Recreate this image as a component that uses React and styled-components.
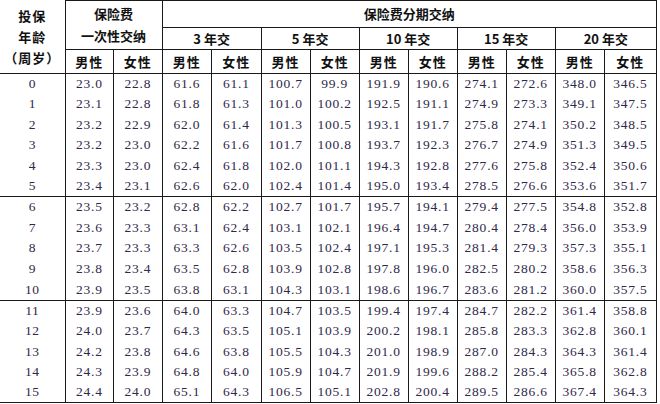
import React from 'react';
import styled, { createGlobalStyle } from 'styled-components';

const GlobalStyle = createGlobalStyle`
  html, body {
    margin: 0;
    padding: 0;
    background: #fff;
  }
`;

const Table = styled.table`
  border-collapse: collapse;
  table-layout: fixed;
  width: 657px;
  font-family: 'Liberation Serif', 'Noto Sans CJK SC', serif;
  td, th {
    border: 1.5px solid #1a1a1a;
    padding: 0;
    text-align: center;
    vertical-align: middle;
    overflow: hidden;
    white-space: nowrap;
  }
  tr > :first-child {
    border-left: none;
  }
  tbody:last-child {
    border-bottom: 1.5px solid #1a1a1a;
  }
`;

const HeadRow = styled.tr`
  height: ${props => props.h}px;
`;

const Head = styled.th`
  font-family: 'Noto Sans CJK SC', sans-serif;
  font-weight: 700;
  font-size: 13px;
  letter-spacing: ${props => props.ls || 0}px;
  line-height: ${props => props.lh || 16}px;
  color: #111;
  border-top: ${props => (props.noTop ? 'none' : '1.5px solid #1a1a1a')} !important;
`;

const Group = styled.tbody`
  border-top: 1.5px solid #1a1a1a;
  td {
    border-top: none;
    border-bottom: none;
  }
`;

const Row = styled.tr`
  height: ${props => props.h}px;
`;

const Cell = styled.td`
  font-size: 13.5px;
  letter-spacing: 0.8px;
  color: #30284a;
  line-height: 16px;
`;

const AgeCell = styled(Cell)`
  letter-spacing: 0.5px;
  color: #302848;
`;

const widths = [65, 48.5, 48.5, 49.5, 49.5, 49, 49, 49, 49, 49, 49, 49, 52];

const data = [
  ['23.0', '22.8', '61.6', '61.1', '100.7', '99.9', '191.9', '190.6', '274.1', '272.6', '348.0', '346.5'],
  ['23.1', '22.8', '61.8', '61.3', '101.0', '100.2', '192.5', '191.1', '274.9', '273.3', '349.1', '347.5'],
  ['23.2', '22.9', '62.0', '61.4', '101.3', '100.5', '193.1', '191.7', '275.8', '274.1', '350.2', '348.5'],
  ['23.2', '23.0', '62.2', '61.6', '101.7', '100.8', '193.7', '192.3', '276.7', '274.9', '351.3', '349.5'],
  ['23.3', '23.0', '62.4', '61.8', '102.0', '101.1', '194.3', '192.8', '277.6', '275.8', '352.4', '350.6'],
  ['23.4', '23.1', '62.6', '62.0', '102.4', '101.4', '195.0', '193.4', '278.5', '276.6', '353.6', '351.7'],
  ['23.5', '23.2', '62.8', '62.2', '102.7', '101.7', '195.7', '194.1', '279.4', '277.5', '354.8', '352.8'],
  ['23.6', '23.3', '63.1', '62.4', '103.1', '102.1', '196.4', '194.7', '280.4', '278.4', '356.0', '353.9'],
  ['23.7', '23.3', '63.3', '62.6', '103.5', '102.4', '197.1', '195.3', '281.4', '279.3', '357.3', '355.1'],
  ['23.8', '23.4', '63.5', '62.8', '103.9', '102.8', '197.8', '196.0', '282.5', '280.2', '358.6', '356.3'],
  ['23.9', '23.5', '63.8', '63.1', '104.3', '103.1', '198.6', '196.7', '283.6', '281.2', '360.0', '357.5'],
  ['23.9', '23.6', '64.0', '63.3', '104.7', '103.5', '199.4', '197.4', '284.7', '282.2', '361.4', '358.8'],
  ['24.0', '23.7', '64.3', '63.5', '105.1', '103.9', '200.2', '198.1', '285.8', '283.3', '362.8', '360.1'],
  ['24.2', '23.8', '64.6', '63.8', '105.5', '104.3', '201.0', '198.9', '287.0', '284.3', '364.3', '361.4'],
  ['24.3', '23.9', '64.8', '64.0', '105.9', '104.7', '201.9', '199.6', '288.2', '285.4', '365.8', '362.8'],
  ['24.4', '24.0', '65.1', '64.3', '106.5', '105.1', '202.8', '200.4', '289.5', '286.6', '367.4', '364.3'],
];

const groups = [
  { start: 0, end: 6, h: 20.5 },
  { start: 6, end: 11, h: 20.8 },
  { start: 11, end: 16, h: 20.5 },
];

const terms = ['3 年交', '5 年交', '10 年交', '15 年交', '20 年交'];

export default function App() {
  return (
    <>
      <GlobalStyle />
      <Table>
        <colgroup>
          {widths.map((w, i) => (
            <col key={i} style={{ width: w }} />
          ))}
        </colgroup>
        <thead>
          <HeadRow h={27}>
            <Head rowSpan={3} noTop lh={21} ls={1}>
              投保
              <br />
              年龄
              <br />
              （周岁）
            </Head>
            <Head rowSpan={2} colSpan={2} lh={22}>
              保险费
              <br />
              一次性交纳
            </Head>
            <Head colSpan={10}>保险费分期交纳</Head>
          </HeadRow>
          <HeadRow h={22}>
            {terms.map(t => (
              <Head key={t} colSpan={2}>
                {t}
              </Head>
            ))}
          </HeadRow>
          <HeadRow h={24}>
            {Array.from({ length: 6 }).flatMap((_, i) => [
              <Head key={`m${i}`} ls={1}>男性</Head>,
              <Head key={`f${i}`} ls={1}>女性</Head>,
            ])}
          </HeadRow>
        </thead>
        {groups.map(g => (
          <Group key={g.start}>
            {data.slice(g.start, g.end).map((row, i) => (
              <Row key={g.start + i} h={g.h}>
                <AgeCell>{g.start + i}</AgeCell>
                {row.map((v, j) => (
                  <Cell key={j}>{v}</Cell>
                ))}
              </Row>
            ))}
          </Group>
        ))}
      </Table>
    </>
  );
}
